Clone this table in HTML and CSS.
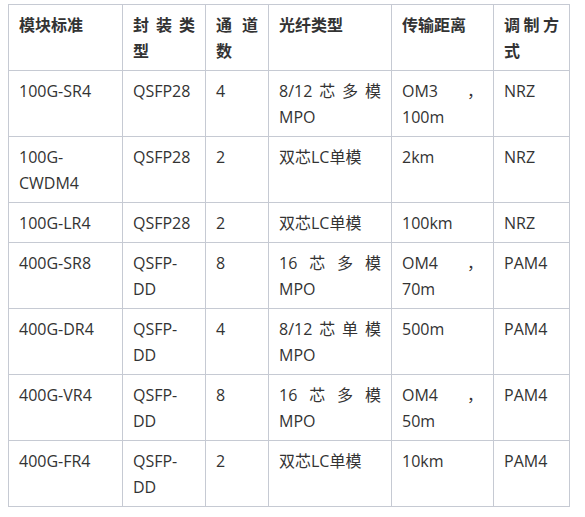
FILE: index.html
```html
<!DOCTYPE html>
<html lang="zh-CN">
<head>
<meta charset="utf-8">
<link rel="stylesheet" href="styles.css">
</head>
<body>
<table class="spec">
<colgroup>
<col class="c1"><col class="c2"><col class="c3"><col class="c4"><col class="c5"><col class="c6">
</colgroup>
<thead>
<tr><th>模块标准</th><th>封装类型</th><th>通道数</th><th>光纤类型</th><th>传输距离</th><th>调制方式</th></tr>
</thead>
<tbody>
<tr><td>100G-SR4</td><td>QSFP28</td><td>4</td><td>8/12芯多模MPO</td><td>OM3，100m</td><td>NRZ</td></tr>
<tr><td>100G-CWDM4</td><td>QSFP28</td><td>2</td><td>双芯LC单模</td><td>2km</td><td>NRZ</td></tr>
<tr><td>100G-LR4</td><td>QSFP28</td><td>2</td><td>双芯LC单模</td><td>100km</td><td>NRZ</td></tr>
<tr><td>400G-SR8</td><td>QSFP-DD</td><td>8</td><td>16芯多模MPO</td><td>OM4，70m</td><td>PAM4</td></tr>
<tr><td>400G-DR4</td><td>QSFP-DD</td><td>4</td><td>8/12芯单模MPO</td><td>500m</td><td>PAM4</td></tr>
<tr><td>400G-VR4</td><td>QSFP-DD</td><td>8</td><td>16芯多模MPO</td><td>OM4，50m</td><td>PAM4</td></tr>
<tr><td>400G-FR4</td><td>QSFP-DD</td><td>2</td><td>双芯LC单模</td><td>10km</td><td>PAM4</td></tr>
</tbody>
</table>
</body>
</html>
```

FILE: styles.css
```css
html, body {
  background: #ffffff;
}
body {
  margin: 4px 8px;
  font-family: "Open Sans", "Noto Sans CJK SC", sans-serif;
  font-size: 16px;
  color: #333333;
}
.spec {
  border-collapse: collapse;
  table-layout: fixed;
  width: 562px;
}
.spec th,
.spec td {
  border: 1px solid #c6cad3;
  padding: 7px 10px 6px 10px;
  line-height: 26px;
  text-align: justify;
  vertical-align: top;
}
.spec th {
  font-weight: bold;
}
.c1 { width: 114px; }
.c2 { width: 83px; }
.c3 { width: 63px; }
.c4 { width: 123px; }
.c5 { width: 102px; }
.c6 { width: 76px; }
```
